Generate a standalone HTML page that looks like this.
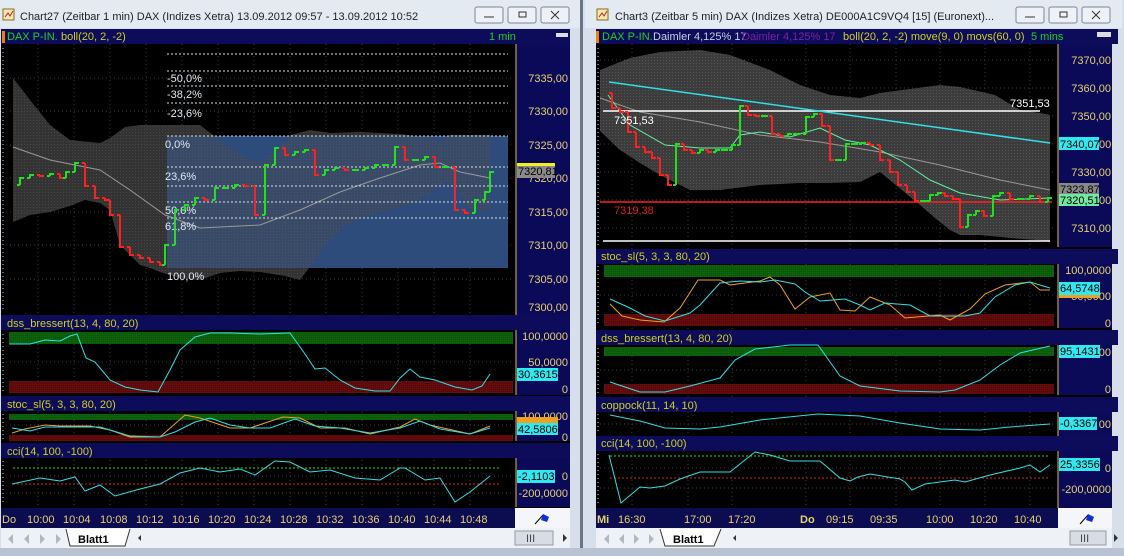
<!DOCTYPE html>
<html><head><meta charset="utf-8">
<style>
html,body{margin:0;padding:0;width:1124px;height:556px;overflow:hidden;background:#c9d3e0}
svg{display:block}
text{font-family:"Liberation Sans",sans-serif;font-size:11px}
</style></head><body>
<svg id="s" width="1124" height="556" viewBox="0 0 1124 556">
<defs>
<pattern id="dg" width="3" height="3" patternUnits="userSpaceOnUse"><rect width="3" height="3" fill="#3c3c3c"/><rect width="1" height="1" fill="#555"/></pattern>
<pattern id="gb" width="2" height="2" patternUnits="userSpaceOnUse"><rect width="2" height="2" fill="#0a5a0a"/><rect width="1" height="1" fill="#0f6a10"/></pattern>
<pattern id="rb" width="2" height="2" patternUnits="userSpaceOnUse"><rect width="2" height="2" fill="#5a0a0a"/><rect width="1" height="1" fill="#6e1010"/></pattern>
</defs>
<rect x="0" y="0" width="580" height="556" fill="#d7dfea"/>
<rect x="583" y="0" width="541" height="556" fill="#d7dfea"/>
<rect x="580" y="0" width="3" height="556" fill="#6a7585"/>
<rect x="0" y="548" width="1124" height="8" fill="#b8c2d0"/>
<rect x="0" y="0" width="580" height="28" fill="#e4eaf2"/>
<rect x="585" y="0" width="537" height="28" fill="#e4eaf2"/>
<rect x="3" y="9" width="11" height="11" fill="#f4e8b0" stroke="#8a6a20"/><path d="M5 17 L8 13 L10 16 L13 11" stroke="#c02020" fill="none"/>
<rect x="597" y="9" width="11" height="11" fill="#f4e8b0" stroke="#8a6a20"/><path d="M599 17 L602 13 L604 16 L607 11" stroke="#c02020" fill="none"/>
<text x="20" y="20" font-size="12.5" fill="#222">Chart27 (Zeitbar 1 min)  DAX (Indizes Xetra) 13.09.2012 09:57 - 13.09.2012 10:52</text>
<text x="615" y="20" font-size="12.5" fill="#222">Chart3 (Zeitbar 5 min)  DAX (Indizes Xetra) DE000A1C9VQ4 [15] (Euronext)...</text>
<g fill="#eef2f7" stroke="#7a8699">
<rect x="475" y="7" width="28" height="16" rx="2"/><rect x="508" y="7" width="28" height="16" rx="2"/><rect x="541" y="7" width="28" height="16" rx="2"/>
<rect x="1016" y="7" width="28" height="16" rx="2"/><rect x="1049" y="7" width="28" height="16" rx="2"/><rect x="1082" y="7" width="28" height="16" rx="2"/>
</g>
<g stroke="#333" fill="none">
<path d="M484 17h10"/><rect x="519" y="12" width="7" height="5"/><path d="M551 11l8 8M559 11l-8 8"/>
<path d="M1025 17h10"/><rect x="1060" y="12" width="7" height="5"/><path d="M1092 11l8 8M1100 11l-8 8"/>
</g>

<!-- LEFT WINDOW -->
<rect x="1" y="29" width="569" height="479" fill="#000"/>
<g stroke="#3a3a3a" stroke-dasharray="1,3">
<path d="M38 44V508M74 44V508M110 44V508M146 44V508M182 44V508M218 44V508M254 44V508M290 44V508M326 44V508M362 44V508M398 44V508M434 44V508M470 44V508"/>
<path d="M6 78H512M6 111H512M6 145H512M6 178H512M6 212H512M6 245H512M6 279H512M6 362H512M6 425H512M6 476H512M6 493H512"/>
</g>
<g stroke="#ddd" stroke-dasharray="1,3"><path d="M3 48V310M3 334V392M3 414V440M3 461V505"/></g>
<rect x="1" y="29" width="569" height="15" fill="#0c0c5a"/>
<rect x="2" y="31" width="3" height="12" fill="#f08000"/>
<text x="7" y="40" fill="#20d020">DAX P-IN.</text><text x="61" y="40" fill="#d0d020">boll(20, 2, -2)</text>
<text x="489" y="40" fill="#20d020">1 min</text>
<rect x="556" y="33" width="12" height="4" fill="#ddd"/>
<rect x="516" y="44" width="54" height="271" fill="#0a0a58"/><path d="M516 44V315" stroke="#e0c040"/>
<g fill="#e8d070" text-anchor="end" font-size="12">
<text x="568" y="82">7335,00</text><text x="568" y="115">7330,00</text><text x="568" y="149">7325,00</text><text x="568" y="182">7320,00</text><text x="568" y="216">7315,00</text><text x="568" y="249">7310,00</text><text x="568" y="283">7305,00</text><text x="568" y="311">7300,00</text>
</g>
<rect x="167" y="136" width="341" height="132" fill="#24406a"/>
<path fill="url(#dg)" fill-opacity="0.85" d="M13 78L30 100L50 125L70 140L100 143L110 138L125 127L140 125L157 125L200 125L230 148L250 160L262 163L275 150L290 135L310 130L330 133L360 132L400 134L430 138L440 143L450 135L490 135L490 210L470 210L455 185L445 182L435 190L420 200L400 207L370 215L345 225L330 240L300 280L285 276L260 272L240 271L220 273L200 280L180 278L160 272L150 268L140 265L120 245L110 210L100 203L85 200L70 206L50 212L30 215L13 222Z"/>
<rect x="167" y="136" width="341" height="132" fill="#3a5a90" fill-opacity="0.45"/>
<polyline fill="none" stroke="#999" points="13,147 50,160 100,170 130,190 165,215 200,228 260,225 300,210 340,192 380,178 420,165 440,163 460,172 490,178"/>
<g stroke="#ddd" stroke-dasharray="2,2">
<path d="M167 54H508M167 71H508M167 86H508M167 103H508M167 136H508M167 167H508M167 186H508M167 202H508M167 218H508"/>
</g>
<g fill="#e0e8f0">
<text x="167" y="82">-50,0%</text><text x="167" y="98">-38,2%</text><text x="167" y="117">-23,6%</text><text x="165" y="148">0,0%</text><text x="165" y="180">23,6%</text><text x="165" y="214">50,0%</text><text x="165" y="230">61,8%</text><text x="167" y="280">100,0%</text>
</g>
<g id="lbars"></g>
<rect x="517" y="165" width="38" height="13" fill="#8a8a8a"/><rect x="517" y="163" width="38" height="3" fill="#f0f020"/>
<text x="518" y="175" fill="#000">7320,81</text>
<rect x="1" y="315" width="569" height="15" fill="#0c0c5a"/><text x="7" y="327" fill="#d0d020">dss_bressert(13, 4, 80, 20)</text>
<rect x="9" y="332" width="504" height="12" fill="url(#gb)"/><rect x="9" y="381" width="504" height="12" fill="url(#rb)"/>
<rect x="516" y="330" width="54" height="65" fill="#0a0a58"/><path d="M516 330V395" stroke="#e0c040"/>
<polyline fill="none" stroke="#30e0e8" points="9,344 30,344 45,340 60,341 70,336 77,334 86,358 95,362 110,380 125,387 140,390 158,392 170,370 180,350 195,337 210,333 230,333 260,334 290,333 305,354 315,369 325,368 340,380 355,388 375,391 390,391 400,378 410,369 420,377 435,380 455,387 472,390 482,386 490,374"/>
<g fill="#e8d070" text-anchor="end" font-size="12"><text x="568" y="340">100,0000</text><text x="568" y="366">50,0000</text><text x="568" y="393">0</text></g>
<rect x="517" y="368" width="41" height="13" fill="#30e8f0"/><text x="518" y="378" fill="#000">30,3615</text>
<rect x="1" y="396" width="569" height="15" fill="#0c0c5a"/><text x="7" y="408" fill="#d0d020">stoc_sl(5, 3, 3, 80, 20)</text>
<rect x="9" y="414" width="504" height="6" fill="url(#gb)"/><rect x="9" y="435" width="504" height="6" fill="url(#rb)"/>
<rect x="516" y="411" width="54" height="30" fill="#0a0a58"/><path d="M516 411V441" stroke="#e0c040"/>
<polyline fill="none" stroke="#f0a020" points="12,433 25,429 45,425 60,426 90,426 110,430 130,437 160,437 185,415 200,418 230,428 250,428 283,417 300,418 320,428 345,428 370,434 400,427 415,419 430,425 470,434 490,426"/>
<polyline fill="none" stroke="#30e0e8" points="12,428 30,431 45,427 60,427 100,427 110,430 130,436 160,437 175,432 195,422 210,418 230,425 250,428 270,428 295,419 315,426 340,428 370,433 400,428 420,421 440,429 470,434 490,428"/>
<g fill="#e8d070" text-anchor="end" font-size="12"><text x="568" y="420">100,0000</text><text x="568" y="441">0</text></g>
<rect x="517" y="417" width="41" height="6" fill="#f0a020"/>
<rect x="517" y="423" width="41" height="12" fill="#30e8f0"/><text x="518" y="433" fill="#000">42,5806</text>
<rect x="1" y="443" width="569" height="15" fill="#0c0c5a"/><text x="7" y="455" fill="#d0d020">cci(14, 100, -100)</text>
<path d="M13 468H500" stroke="#20e020" stroke-dasharray="2,2"/><path d="M13 484H500" stroke="#e02020" stroke-dasharray="2,2"/>
<rect x="516" y="458" width="54" height="49" fill="#0a0a58"/><path d="M516 458V507" stroke="#e0c040"/>
<polyline fill="none" stroke="#30e0e8" points="12,484 40,478 60,481 75,477 85,491 100,485 115,496 140,489 160,484 180,473 200,468 220,472 240,469 255,475 275,461 290,462 310,472 330,470 355,478 380,480 400,468 405,468 425,480 440,478 455,502 470,492 490,476"/>
<g fill="#e8d070" text-anchor="end" font-size="12"><text x="568" y="480">0</text><text x="568" y="497">-200,0000</text></g>
<rect x="517" y="470" width="38" height="13" fill="#30e8f0"/><text x="518" y="480" fill="#000">-2,1103</text>
<rect x="1" y="508" width="514" height="20" fill="#0c0c50"/>
<rect x="515" y="508" width="55" height="20" fill="#f4f6fa"/>
<g fill="#e8d070" font-size="12.5"><text x="2" y="523">Do</text><text x="27" y="523">10:00</text><text x="63" y="523">10:04</text><text x="100" y="523">10:08</text><text x="136" y="523">10:12</text><text x="172" y="523">10:16</text><text x="208" y="523">10:20</text><text x="244" y="523">10:24</text><text x="280" y="523">10:28</text><text x="316" y="523">10:32</text><text x="352" y="523">10:36</text><text x="388" y="523">10:40</text><text x="424" y="523">10:44</text><text x="460" y="523">10:48</text></g>
<path d="M535 524L543 515" stroke="#000"/><path d="M543 514l6 3-2 5-6-2z" fill="#1030d0"/>
<rect x="1" y="528" width="569" height="20" fill="#eef1f6"/>
<g fill="#b0b8c4"><path d="M5 533v12M8 539l5-5v10zM24 539l5-5v10zM40 534l5 5-5 5zM56 534l5 5-5 5zM63 533v12"/></g>
<path d="M66 529L70 546H125L130 529" fill="#fff" stroke="#333"/>
<text x="78" y="543" font-size="13" font-weight="bold" fill="#000">Blatt1</text>
<rect x="515" y="531" width="38" height="14" fill="#d8dde5" stroke="#999"/><text x="526" y="542" fill="#444">III</text>
<path d="M563 534l4 4-4 4z" fill="#333"/><path d="M141 535l-3 3 3 3z" fill="#333"/>

<!-- RIGHT WINDOW -->
<rect x="596" y="29" width="516" height="479" fill="#000"/>
<g stroke="#3a3a3a" stroke-dasharray="1,3">
<path d="M632 44V508M688 44V508M732 44V508M806 44V508M850 44V508M896 44V508M940 44V508M985 44V508M1030 44V508"/>
<path d="M600 60H1055M600 88H1055M600 116H1055M600 144H1055M600 172H1055M600 200H1055M600 228H1055M600 295H1055M600 370H1055M600 424H1055M600 468H1055M600 488H1055"/>
</g>
<g stroke="#ddd" stroke-dasharray="1,3"><path d="M598 48V245M598 266V326M598 348V393M598 414V434M598 454V505"/></g>
<rect x="596" y="29" width="522" height="15" fill="#0c0c5a"/>
<rect x="596" y="31" width="3" height="12" fill="#f08000"/>
<g font-size="10.5"><text x="602" y="40" fill="#20d020">DAX P-IN.</text><text x="653" y="40" fill="#c8d0e0">Daimler  4,125% 17</text><text x="742" y="40" fill="#8020a0">Daimler  4,125% 17</text><text x="843" y="40" fill="#d0d020">boll(20, 2, -2) move(9, 0) movs(60, 0)</text><text x="1031" y="40" fill="#20d020">5 mins</text></g>
<rect x="1097" y="32" width="14" height="5" fill="#ddd"/>
<rect x="1058" y="44" width="54" height="203" fill="#0a0a58"/><path d="M1058 44V247" stroke="#e0c040"/>
<g fill="#e8d070" text-anchor="end" font-size="12">
<text x="1111" y="64">7370,00</text><text x="1111" y="92">7360,00</text><text x="1111" y="120">7350,00</text><text x="1111" y="176">7330,00</text><text x="1111" y="232">7310,00</text>
</g>
<path fill="url(#dg)" d="M600 70L630 58L660 52L700 50L730 55L770 70L800 85L830 95L860 98L880 93L940 85L960 87L995 95L1020 110L1040 113L1050 115L1050 241L1010 238L980 235L960 235L950 230L935 218L920 205L880 172L860 182L830 183L800 183L760 185L720 190L690 190L660 175L640 163L620 150L600 131Z"/>
<polyline fill="none" stroke="#999" points="600,98 640,112 700,122 760,135 820,142 880,152 940,165 1000,180 1050,190"/>
<path d="M603 111H1040M603 241H1050" stroke="#fff" stroke-width="1.5"/>
<path d="M600 202H1052" stroke="#ff2020" stroke-width="1.5"/>
<path d="M609 82L1050 143" stroke="#30e0e8" stroke-width="1.5"/>
<polyline fill="none" stroke="#60f0a0" points="608,95 630,125 665,145 700,148 730,148 740,135 760,132 790,137 820,128 845,140 870,145 900,160 930,180 960,193 1000,200 1050,198"/>
<g id="rbars"></g>
<text x="1010" y="107" fill="#fff" font-size="12">7351,53</text>
<text x="614" y="124" fill="#fff" font-size="12">7351,53</text>
<text x="614" y="214" fill="#e02020" font-size="12">7319,38</text>
<rect x="1059" y="137" width="40" height="13" fill="#30e8f0"/><text x="1060" y="148" fill="#000" font-size="12">7340,07</text><text x="1099" y="148" fill="#e8d070" font-size="12">00</text>
<rect x="1059" y="183" width="40" height="11" fill="#888"/><text x="1060" y="193" fill="#000">7323,87</text>
<rect x="1059" y="194" width="40" height="12" fill="#70e8a0"/><text x="1060" y="204" fill="#000" font-size="12">7320,51</text><text x="1099" y="204" fill="#e8d070" font-size="12">00</text>
<rect x="596" y="249" width="522" height="15" fill="#0c0c5a"/><text x="601" y="260" fill="#d0d020">stoc_sl(5, 3, 3, 80, 20)</text>
<rect x="604" y="265" width="450" height="12" fill="url(#gb)"/><rect x="604" y="314" width="450" height="12" fill="url(#rb)"/>
<rect x="1058" y="264" width="54" height="64" fill="#0a0a58"/><path d="M1058 264V328" stroke="#e0c040"/>
<polyline fill="none" stroke="#f0a020" points="610,304 622,316 640,320 664,322 680,308 698,280 720,280 730,285 760,281 770,277 780,285 795,309 810,297 830,293 840,310 855,311 870,297 890,305 905,318 940,315 950,320 970,309 985,294 1005,285 1030,282 1040,290 1050,290"/>
<polyline fill="none" stroke="#30e0e8" points="610,299 630,308 645,316 665,321 690,313 700,305 720,283 740,281 760,282 775,280 795,284 805,292 820,301 845,299 860,305 870,310 885,303 910,305 930,316 945,316 965,316 980,313 995,297 1015,285 1030,282 1050,288"/>
<g fill="#e8d070" text-anchor="end" font-size="12"><text x="1111" y="274">100,0000</text><text x="1111" y="300">50,0000</text><text x="1111" y="327">0</text></g>
<rect x="1059" y="282" width="41" height="13" fill="#30e8f0"/><rect x="1059" y="295" width="41" height="3" fill="#f0a020"/><text x="1060" y="292" fill="#000" font-size="12">64,5748</text>
<rect x="596" y="330" width="522" height="15" fill="#0c0c5a"/><text x="601" y="342" fill="#d0d020">dss_bressert(13, 4, 80, 20)</text>
<rect x="604" y="347" width="450" height="9" fill="url(#gb)"/><rect x="604" y="384" width="450" height="10" fill="url(#rb)"/>
<rect x="1058" y="345" width="54" height="50" fill="#0a0a58"/><path d="M1058 345V395" stroke="#e0c040"/>
<polyline fill="none" stroke="#30e0e8" points="610,382 640,392 665,392 690,386 720,378 735,360 755,349 790,345 818,345 840,376 860,386 900,391 940,392 955,390 980,380 1000,365 1020,353 1050,346"/>
<g fill="#e8d070" text-anchor="end" font-size="12"><text x="1111" y="356">00</text><text x="1111" y="393">0</text></g>
<rect x="1059" y="345" width="41" height="13" fill="#30e8f0"/><text x="1060" y="355" fill="#000" font-size="12">95,1431</text>
<rect x="596" y="397" width="522" height="15" fill="#0c0c5a"/><text x="601" y="409" fill="#d0d020">coppock(11, 14, 10)</text>
<rect x="1058" y="412" width="54" height="24" fill="#0a0a58"/><path d="M1058 412V436" stroke="#e0c040"/>
<polyline fill="none" stroke="#30e0e8" points="610,415 640,421 665,428 700,429 720,427 760,420 818,414 860,416 900,423 940,429 980,430 1010,427 1050,424"/>
<rect x="1059" y="417" width="38" height="13" fill="#30e8f0"/><text x="1060" y="427" fill="#000" font-size="12">-0,3367</text><text x="1111" y="428" fill="#e8d070" text-anchor="end" font-size="12">00</text>
<rect x="596" y="436" width="522" height="15" fill="#0c0c5a"/><text x="601" y="447" fill="#d0d020">cci(14, 100, -100)</text>
<path d="M610 456H1050" stroke="#20e020" stroke-dasharray="2,2"/><path d="M610 478H1050" stroke="#e02020" stroke-dasharray="2,2"/>
<rect x="1058" y="451" width="54" height="57" fill="#0a0a58"/><path d="M1058 451V508" stroke="#e0c040"/>
<polyline fill="none" stroke="#30e0e8" points="609,455 621,503 640,487 650,488 665,486 680,479 700,472 730,472 745,460 755,452 770,455 790,461 820,461 840,478 850,481 858,477 870,474 900,479 905,482 912,490 925,484 955,480 965,482 990,475 1020,468 1030,465 1040,472 1050,465"/>
<g fill="#e8d070" text-anchor="end" font-size="12"><text x="1111" y="472">0</text><text x="1111" y="493">-200,0000</text></g>
<rect x="1059" y="458" width="41" height="13" fill="#30e8f0"/><text x="1060" y="468" fill="#000" font-size="12">25,3356</text>
<rect x="596" y="508" width="462" height="20" fill="#0c0c50"/>
<rect x="1058" y="508" width="54" height="20" fill="#f4f6fa"/>
<g fill="#e8d070" font-size="12.5"><text x="597" y="523" font-weight="bold">Mi</text><text x="618" y="523">16:30</text><text x="684" y="523">17:00</text><text x="728" y="523">17:20</text><text x="800" y="523" font-weight="bold">Do</text><text x="826" y="523">09:15</text><text x="870" y="523">09:35</text><text x="926" y="523">10:00</text><text x="970" y="523">10:20</text><text x="1014" y="523">10:40</text></g>
<path d="M1080 524L1088 515" stroke="#000"/><path d="M1088 514l6 3-2 5-6-2z" fill="#1030d0"/>
<rect x="596" y="528" width="516" height="20" fill="#eef1f6"/>
<g fill="#b0b8c4"><path d="M601 533v12M604 539l5-5v10zM619 539l5-5v10zM634 534l5 5-5 5zM649 534l5 5-5 5zM656 533v12"/></g>
<path d="M660 529L665 546H714L721 529" fill="#fff" stroke="#333"/>
<text x="673" y="543" font-size="13" font-weight="bold" fill="#000">Blatt1</text>
<rect x="1070" y="531" width="36" height="14" fill="#d8dde5" stroke="#999"/><text x="1080" y="542" fill="#444">III</text>
<path d="M1114 534l4 4-4 4z" fill="#333"/><path d="M736 535l-3 3 3 3z" fill="#333"/>
</svg>
<script>
var NS="http://www.w3.org/2000/svg";
function bars(id,pts,w){var g=document.getElementById(id),red="",grn="";
for(var i=1;i<pts.length;i++){var p=pts[i-1],c=pts[i];var d="M"+c[0]+" "+p[1]+"V"+c[1]+"H"+(c[0]+w)+"M"+(c[0]-3)+" "+p[1]+"H"+c[0];
if(c[1]>p[1])red+=d;else grn+=d;}
[["#ff2020",red],["#20e020",grn]].forEach(function(a){var e=document.createElementNS(NS,"path");e.setAttribute("d",a[1]);e.setAttribute("stroke",a[0]);e.setAttribute("stroke-width","2");e.setAttribute("fill","none");g.appendChild(e);});}
bars("lbars",[[10,185],[20,178],[30,175],[40,176],[50,174],[60,178],[66,172],[75,163],[85,186],[95,198],[105,200],[110,215],[120,247],[130,255],[140,258],[150,262],[160,265],[165,245],[175,210],[185,205],[195,198],[205,200],[215,188],[225,188],[235,185],[245,186],[255,215],[265,165],[275,148],[285,155],[295,152],[305,150],[315,175],[325,170],[335,168],[345,170],[355,170],[365,168],[375,165],[385,165],[395,147],[405,160],[415,160],[425,157],[435,167],[445,167],[455,210],[465,213],[475,200],[485,192],[490,172]],4);
bars("rbars",[[608,93],[612,108],[620,112],[628,132],[636,147],[645,152],[652,158],[660,175],[668,185],[676,144],[684,150],[692,153],[700,150],[708,152],[716,150],[724,150],[732,145],[740,106],[748,115],[756,116],[764,116],[772,134],[780,136],[788,134],[796,134],[806,117],[814,114],[822,126],[830,160],[838,160],[846,144],[854,144],[862,143],[870,145],[880,160],[890,172],[898,185],[907,192],[915,201],[923,201],[930,195],[938,193],[945,196],[953,199],[960,227],[968,215],[976,211],[984,216],[993,196],[1000,193],[1010,199],[1020,199],[1030,196],[1040,202],[1048,198]],4);
</script>
</body></html>
